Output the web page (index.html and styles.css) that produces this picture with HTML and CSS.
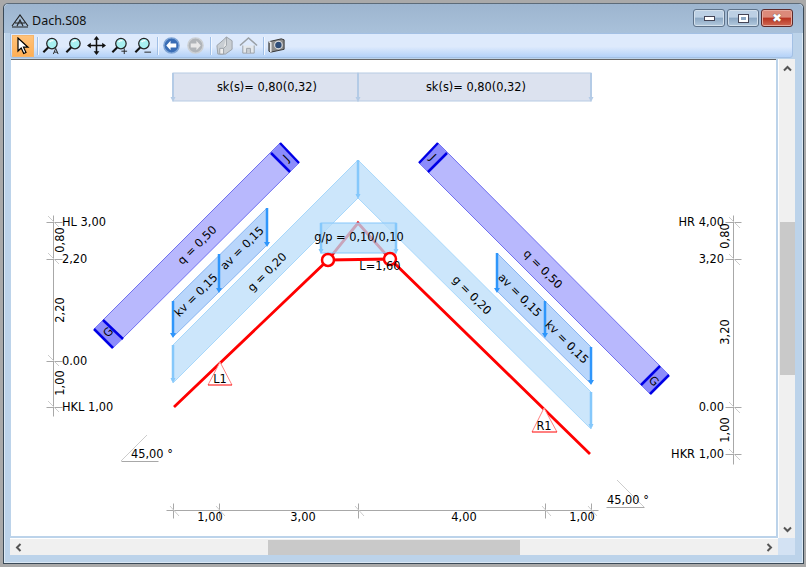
FILE: index.html
```html
<!DOCTYPE html>
<html lang="de">
<head>
<meta charset="utf-8">
<title>Dach.S08</title>
<link rel="stylesheet" href="styles.css">
</head>
<body>
<svg class="defs" width="0" height="0" aria-hidden="true">
  <defs>
    <symbol id="lens" viewBox="0 0 20 20">
      <circle cx="11.5" cy="8" r="5.5" fill="#a8f0f0" stroke="#222" stroke-width="1.3"/>
      <path d="M9 6.5q1.5-2 4-1.5" fill="none" stroke="#fff" stroke-width="1.5"/>
      <path d="M7.5 12 2.500 17" stroke="#111" stroke-width="2.2" fill="none"/>
    </symbol>
  </defs>
</svg>
<div class="window">
  <header class="titlebar">
    <svg class="appicon" width="18" height="15" viewBox="0 0 18 15">
      <path d="M1 13 9 2l8 11M4 10h10M1 14h16M6 13l3-6 3 6" fill="none" stroke="#222" stroke-width="1.1"/>
    </svg>
    <span class="title">Dach.S08</span>
    <div class="winbtns">
      <div class="winbtn"><span class="glyph-min"></span></div>
      <div class="winbtn"><span class="glyph-max"></span></div>
      <div class="winbtn close"><span class="glyph-x">✖</span></div>
    </div>
  </header>
  <nav class="toolbar">
    <div class="tool active">
      <svg width="14" height="18" viewBox="0 0 14 18"><path d="M2 1v13l3.200-3 2.500 5.500 2.300-1-2.500-5.300H12z" fill="#fff" stroke="#000" stroke-width="1.200"/></svg>
    </div>
    <span class="sep"></span>
    <div class="tool"><svg class="ic" viewBox="0 0 20 20"><use href="#lens"/><path d="M13 19l2.500-6 2.500 6M14 17h3" fill="none" stroke="#222"/></svg></div>
    <div class="tool"><svg class="ic" viewBox="0 0 20 20"><use href="#lens"/></svg></div>
    <div class="tool"><svg class="ic" viewBox="0 0 20 20"><path d="M10 2v16M2 10h16" stroke="#111" stroke-width="1.600"/><path d="M10 0l3 4H7zM10 20l3-4H7zM0 10l4-3v6zM20 10l-4-3v6z" fill="#111"/></svg></div>
    <div class="tool"><svg class="ic" viewBox="0 0 20 20"><use href="#lens"/><path d="M12 16h6M15 13v6" stroke="#222"/></svg></div>
    <div class="tool"><svg class="ic" viewBox="0 0 20 20"><use href="#lens"/><path d="M12 17h7" stroke="#222"/></svg></div>
    <span class="sep"></span>
    <div class="tool nav"><svg class="ic" viewBox="0 0 20 20"><circle cx="10" cy="10" r="8" fill="#3a6db5" stroke="#7ea4d6" stroke-width="1.500"/><path d="M9 5 4.500 10 9 15v-3h6V8H9z" fill="#fff"/></svg></div>
    <div class="tool nav"><svg class="ic" viewBox="0 0 20 20"><circle cx="10" cy="10" r="8" fill="#b0b4b8" stroke="#ccd0d4" stroke-width="1.500"/><path d="M11 5l4.500 5-4.500 5v-3H5V8h6z" fill="#e8e8e8"/></svg></div>
    <span class="sep"></span>
    <div class="tool nav"><svg class="ic" viewBox="0 0 20 20"><path d="M2 10 9 4l3-3 6 4v9l-7 5H3z" fill="#c9ced3" stroke="#9aa0a6"/><path d="M5 13h4v6H5zM12 1v9l-3 3" fill="#eee" stroke="#9aa0a6"/></svg></div>
    <div class="tool nav"><svg class="ic" viewBox="0 0 20 20"><path d="M1 10 10 2l9 8" fill="none" stroke="#9aa0a6" stroke-width="1.600"/><path d="M4 10v8h12v-8" fill="#e4e8ec" stroke="#9aa0a6"/><path d="M8 18v-5h4v5" fill="#c9ced3" stroke="#9aa0a6"/></svg></div>
    <span class="sep"></span>
    <div class="tool"><svg class="ic" viewBox="0 0 20 20"><path d="M2 6l13-3 3 1v10l-14 3-2-1z" fill="#8c8c8c" stroke="#333"/><path d="M2 6l2 1v10" fill="none" stroke="#eee" stroke-width="1.500"/><circle cx="12" cy="9.500" r="4" fill="#2f4d78" stroke="#ddd" stroke-width="1.200"/></svg></div>
  </nav>
  <div class="body">
    <main class="client">
      <svg class="drawing" width="765" height="476" viewBox="11 60 765 476">
        <!-- snow -->
        <rect class="snow" x="173" y="73" width="185" height="28"/>
        <rect class="snow" x="358" y="73" width="233" height="28"/>
        <path class="snowarrow" d="M173 73v26M358 73v26M591 73v26"/>
        <path class="snowhead" d="M170.500 97h5l-2.500 5zM355.500 97h5l-2.500 5zM588.500 97h5l-2.500 5z"/>
        <text class="t mid" x="267" y="91">sk(s)= 0,80(0,32)</text>
        <text class="t mid" x="476" y="91">sk(s)= 0,80(0,32)</text>

        <!-- g load -->
        <path class="gload" d="M173 345 358 160 591 392v37L358 198 173 383z"/>
        <path class="garrow" d="M173 345v36M358 160v36M591 392v35"/>
        <path class="ghead" d="M170.500 378h5l-2.500 5zM355.500 194h5l-2.500 5zM588.500 424h5l-2.500 5z"/>

        <!-- structure -->
        <path class="member" d="M174 407 328 260 390 259 590 454"/>
        <path class="member" d="M328 260 358 223 390 259"/>

        <!-- g/p load -->
        <rect class="gp" x="321" y="223" width="75" height="30"/>
        <path class="garrow" d="M321 223v28M396 223v28"/>
        <path class="ghead" d="M318.500 249h5l-2.500 5zM393.500 249h5l-2.500 5z"/>
        <circle class="hinge" cx="328" cy="260" r="6"/>
        <circle class="hinge" cx="390" cy="259" r="6"/>

        <!-- q loads -->
        <path class="qload" d="M280 143 299 163 113 348 94 329z"/>
        <path class="qload" d="M438 143 419 163 650 394 669 375z"/>
        <path class="qend" d="M280 143 299 163 290 172 271 153z"/>
        <path class="qend" d="M94 329 113 348 123 339 103 320z"/>
        <path class="qend" d="M438 143 419 163 428 172 447 153z"/>
        <path class="qend" d="M669 375 650 394 641 385 660 366z"/>
        <path class="qedge" d="M271 153l19 19M280 143l19 20M103 320l20 19M94 329l19 19M447 153l-19 19M438 143l-19 20M660 366l-19 19M669 375l-19 19"/>

        <!-- kv/av -->
        <path class="wload" d="M173 301 267 208v37L173 337z"/>
        <path class="wload" d="M497 253 591 347v37L497 291z"/>
        <path class="warrow" d="M173 301v33M219 254v35M267 208v35M497 253v36M545 301v34M591 347v35"/>
        <path class="whead" d="M170 333h6l-3 5zM216 288h6l-3 5zM264 242h6l-3 5zM494 288h6l-3 5zM542 333h6l-3 5zM588 380h6l-3 5z"/>

        <!-- supports -->
        <path class="sup" d="M208 385 220 362 232 385"/>
        <path class="supbase" d="M208 385h24"/>
        <path class="sup" d="M532 432 544 408 557 432"/>
        <path class="supbase" d="M532 432h25"/>
        <text class="t mid" x="220" y="383">L1</text>
        <text class="t mid" x="544" y="430">R1</text>

        <!-- rotated labels -->
        <text class="t mid" transform="translate(197 245) rotate(-45)" y="4">q = 0,50</text>
        <text class="t mid" transform="translate(196 295) rotate(-45)" y="4">kv = 0,15</text>
        <text class="t mid" transform="translate(242 248) rotate(-45)" y="4">av = 0,15</text>
        <text class="t mid" transform="translate(267 272) rotate(-45)" y="4">g = 0,20</text>
        <text class="t mid" transform="translate(472 295) rotate(45)" y="4">g = 0,20</text>
        <text class="t mid" transform="translate(543 269) rotate(45)" y="4">q = 0,50</text>
        <text class="t mid" transform="translate(520 295) rotate(45)" y="4">av = 0,15</text>
        <text class="t mid" transform="translate(567 342) rotate(45)" y="4">kv = 0,15</text>
        <text class="t mid" transform="translate(286 158) rotate(-45)" y="4">J</text>
        <text class="t mid" transform="translate(433 157) rotate(45)" y="4">J</text>
        <text class="t mid" transform="translate(108 332) rotate(-45)" y="4">G</text>
        <text class="t mid" transform="translate(654 381) rotate(45)" y="4">G</text>
        <text class="t mid" x="359" y="241">g/p = 0,10/0,10</text>
        <text class="t mid" x="380" y="270">L=1,60</text>

        <!-- left dimensions -->
        <path class="dim" d="M53 215v201M46 222h16M46 259h16M46 361h16M46 407h16"/>
        <path class="tick" d="M48 216l11 11M48 253l11 11M48 355l11 11M48 401l11 11"/>
        <text class="t" x="62" y="226">HL 3,00</text>
        <text class="t" x="62" y="263">2,20</text>
        <text class="t" x="62" y="365">0.00</text>
        <text class="t" x="62" y="411">HKL 1,00</text>
        <text class="t mid" transform="translate(60 240) rotate(-90)" y="4">0,80</text>
        <text class="t mid" transform="translate(60 310) rotate(-90)" y="4">2,20</text>
        <text class="t mid" transform="translate(60 383) rotate(-90)" y="4">1,00</text>

        <!-- right dimensions -->
        <path class="dim" d="M733 215v249M725 222h16M725 259h16M725 407h16M725 454h16"/>
        <path class="tick" d="M729 217l11 11M729 254l11 11M729 402l11 11M729 449l11 11"/>
        <text class="t end" x="724" y="226">HR 4,00</text>
        <text class="t end" x="724" y="263">3,20</text>
        <text class="t end" x="724" y="411">0.00</text>
        <text class="t end" x="724" y="458">HKR 1,00</text>
        <text class="t mid" transform="translate(725 236) rotate(-90)" y="4">0,80</text>
        <text class="t mid" transform="translate(725 332) rotate(-90)" y="4">3,20</text>
        <text class="t mid" transform="translate(725 430) rotate(-90)" y="4">1,00</text>

        <!-- angles -->
        <path class="tick" d="M147 435 121 461"/>
        <path class="dim" d="M121 461h37"/>
        <text class="t" x="131" y="458">45,00 °</text>
        <path class="tick" d="M617 480 644 507"/>
        <path class="dim" d="M606 507h38"/>
        <text class="t" x="607" y="504">45,00 °</text>

        <!-- bottom dimensions -->
        <path class="dim" d="M166 510H598M173 503v15M219 503v15M358 503v15M545 503v15M591 503v15"/>
        <path class="tick" d="M170 506l9 10M216 506l9 10M355 506l9 10M542 506l9 10M588 506l9 10"/>
        <text class="t mid" x="210" y="521">1,00</text>
        <text class="t mid" x="303" y="521">3,00</text>
        <text class="t mid" x="464" y="521">4,00</text>
        <text class="t mid" x="582" y="521">1,00</text>
      </svg>
    </main>
    <aside class="vscroll">
      <svg class="arrow" width="9" height="7" viewBox="0 0 9 7"><path d="M1 5.500 4.500 2 8 5.500" fill="none" stroke="#555" stroke-width="2"/></svg>
      <div class="vtrack"><div class="vthumb"></div></div>
      <svg class="arrow" width="9" height="7" viewBox="0 0 9 7"><path d="M1 1.500 4.500 5 8 1.500" fill="none" stroke="#555" stroke-width="2"/></svg>
    </aside>
  </div>
  <div class="bottom">
    <div class="hscroll">
      <svg class="arrow" width="7" height="9" viewBox="0 0 7 9"><path d="M5.500 1 2 4.500 5.500 8" fill="none" stroke="#555" stroke-width="2"/></svg>
      <div class="htrack"><div class="hthumb"></div></div>
      <svg class="arrow" width="7" height="9" viewBox="0 0 7 9"><path d="M1.500 1 5 4.500 1.500 8" fill="none" stroke="#555" stroke-width="2"/></svg>
    </div>
    <div class="corner"></div>
  </div>
</div>
</body>
</html>
```
FILE: styles.css
```css
* { box-sizing: border-box; }
html, body { margin: 0; height: 100%; overflow: hidden; }
body {
  background: #a9a9a9;
  padding: 3px 2px 3px 3px;
  font-family: "DejaVu Sans", sans-serif;
}
.defs { position: absolute; }
.window {
  width: 801px;
  height: 561px;
  display: flex;
  flex-direction: column;
  background: #bcd3ea;
  border: 1px solid #3a4a58;
  border-top-color: #5d6b78;
  border-radius: 5px 5px 0 0;
  box-shadow: inset 0 0 0 1px #dbe8f4;
  padding: 0 7px 6px 6px;
}
.titlebar {
  height: 29px;
  flex: none;
  margin: 0 -7px 0 -6px;
  padding: 0 10px 0 7px;
  display: flex;
  align-items: center;
  background: linear-gradient(#9db5cf, #a9c1da);
  border-radius: 5px 5px 0 0;
}
.appicon { margin-right: 3px; margin-top: 3px; }
.title {
  font: 12.5px "Noto Sans", sans-serif;
  color: #111;
  margin-top: 4px;
}
.winbtns { margin-left: auto; display: flex; gap: 2px; margin-top: -1px; }
.winbtn {
  width: 32px;
  height: 18px;
  border: 1px solid #5d7188;
  border-radius: 3px;
  display: flex;
  align-items: center;
  justify-content: center;
  background: linear-gradient(#bcd0e4 0 45%, #8ba7c3 50%, #b4cade);
  box-shadow: inset 0 0 0 1px #d3e0ec;
}
.winbtn.close {
  border-color: #5d2a2a;
  background: linear-gradient(#dc8a7a 0 45%, #b8321f 50%, #cf6a55);
  box-shadow: inset 0 0 0 1px #e6a99d;
}
.glyph-min { width: 11px; height: 5px; background: #fff; border: 1px solid #445; }
.glyph-max { width: 9px; height: 7px; background: #8ba7c3; border: 2px solid #fff; outline: 1px solid #445; }
.glyph-x { color: #fff; font-size: 12px; line-height: 1; text-shadow: 0 0 1px #333; }
.toolbar {
  height: 25px;
  flex: none;
  display: flex;
  align-items: center;
  background: linear-gradient(#deeafc 0 55%, #b4d2f8);
  border: 1px solid #a3c0e4;
  border-radius: 0 0 3px 3px;
  padding: 0 0 0 1px;
  margin-right: 3px;
  width: 783px;
}
.tool {
  width: 23px;
  height: 22px;
  flex: none;
  display: flex;
  align-items: center;
  justify-content: center;
}
.tool.nav { width: 24px; }
.tool.active {
  width: 22px;
  background: linear-gradient(#ffc27a, #ffaf55);
  border: 1px solid #f5b56b;
}
.ic { width: 19px; height: 19px; }
.sep {
  width: 1px;
  height: 18px;
  flex: none;
  background: #a0bfe6;
  margin: 0 1px 0 3px;
  box-shadow: 1px 0 #f0f6ff;
}
.body {
  flex: 1;
  min-height: 0;
  display: flex;
  padding-top: 1px;
}
.client {
  width: 765px;
  height: 477px;
  flex: none;
  margin-left: 1px;
  background: #fff;
  border-top: 1px solid #666;
  overflow: hidden;
}
.drawing { display: block; }
.vscroll {
  width: 17px;
  height: 480px;
  flex: none;
  margin-left: 2px;
  background: #f0f0f0;
  display: flex;
  flex-direction: column;
  align-items: center;
  border-left: 1px solid #fff;
}
.vscroll .arrow { margin: 6px 0; flex: none; }
.vtrack { flex: 1; width: 100%; position: relative; }
.vthumb { position: absolute; left: 1px; right: 0; top: 144px; height: 153px; background: #c9c9c9; }
.bottom { display: flex; height: 19px; flex: none; }
.hscroll {
  width: 768px;
  height: 17px;
  background: #f0f0f0;
  border-top: 1px solid #fff;
  display: flex;
  align-items: center;
  padding: 0 5px;
}
.htrack { flex: 1; height: 100%; position: relative; }
.hthumb { position: absolute; left: 246px; width: 252px; top: 1px; bottom: 0; background: #c9c9c9; }
.corner { width: 17px; height: 17px; background: #d3e2f3; }

/* drawing */
.t { font: 11.4px "DejaVu Sans", sans-serif; fill: #000; }
.mid { text-anchor: middle; }
.end { text-anchor: end; }
.snow { fill: #dce2ef; stroke: #b8cce4; stroke-width: 1; }
.snowarrow { stroke: #b4cbe6; stroke-width: 2; fill: none; }
.snowhead { fill: #b4cbe6; }
.gload { fill: #cce6fb; stroke: #a8d8fb; stroke-width: 1; }
.gp { fill: #b5dcfa; fill-opacity: .75; stroke: #85c8fb; stroke-width: 1; }
.garrow { stroke: #85c8fb; stroke-width: 2.500; fill: none; }
.ghead { fill: #85c8fb; }
.member { stroke: #f00; stroke-width: 2.800; fill: none; }
.hinge { fill: #fff; stroke: #f00; stroke-width: 2.500; }
.qload { fill: #b8b8fd; stroke: #7070f0; stroke-width: 1; }
.qend { fill: #8c8cfb; }
.qedge { stroke: #0000e6; stroke-width: 2.500; fill: none; }
.wload { fill: #b9d6fb; stroke: #88b4f0; stroke-width: 1; }
.warrow { stroke: #2f96fb; stroke-width: 2.500; fill: none; }
.whead { fill: #2f96fb; }
.sup { fill: #fff; stroke: #ff8080; stroke-width: 1; }
.supbase { stroke: #f00; stroke-width: 1; fill: none; }
.dim { stroke: #a8a8a8; stroke-width: 1; fill: none; transform: translate(.5px, .5px); }
.tick { stroke: #ccc; stroke-width: 1; fill: none; }
```
